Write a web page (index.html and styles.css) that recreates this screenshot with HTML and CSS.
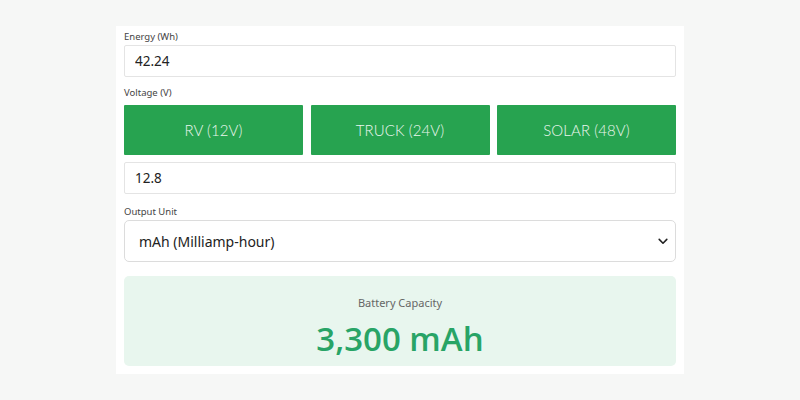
FILE: index.html
```html
<!DOCTYPE html>
<html lang="en">
<head>
<meta charset="utf-8">
<title>Battery Capacity Calculator</title>
<link rel="stylesheet" href="styles.css">
</head>
<body>
<main class="card">
  <label class="label" for="energy">Energy (Wh)</label>
  <input class="field" id="energy" type="text" value="42.24">

  <label class="label" for="voltage">Voltage (V)</label>
  <div class="presets">
    <button class="preset" type="button">RV (12V)</button>
    <button class="preset" type="button">TRUCK (24V)</button>
    <button class="preset" type="button">SOLAR (48V)</button>
  </div>
  <input class="field field-gap" id="voltage" type="text" value="12.8">

  <label class="label" for="unit">Output Unit</label>
  <div class="select-wrap">
    <select class="select" id="unit">
      <option>mAh (Milliamp-hour)</option>
    </select>
    <svg class="chev" width="10" height="7" viewBox="0 0 10 7" aria-hidden="true"><path d="M1.2 1.4 L5 5.2 L8.8 1.4" fill="none" stroke="#222" stroke-width="1.6" stroke-linecap="round" stroke-linejoin="round"/></svg>
  </div>

  <section class="result">
    <div class="result-label">Battery Capacity</div>
    <div class="result-value">3,300 mAh</div>
  </section>
</main>
</body>
</html>
```
FILE: styles.css
```css
html, body {
  margin: 0;
  padding: 0;
}
body {
  background: #f6f7f6;
  font-family: "Noto Sans", "Open Sans", sans-serif;
  padding: 26px 116px 0;
}
.card {
  background: #ffffff;
  width: 552px;
  padding: 4px 8px 8px;
  display: flex;
  flex-direction: column;
}
.label {
  font-size: 9.5px;
  color: #444;
  line-height: 13px;
  margin-bottom: 2px;
}
.field {
  box-sizing: border-box;
  height: 32px;
  border: 1px solid #e4e4e4;
  border-radius: 2px;
  padding: 0 10px;
  font-family: "Noto Sans", sans-serif;
  font-size: 13.5px;
  color: #222;
  background: #fff;
  margin: 0 0 9px;
  outline: none;
}
.field-gap {
  margin-top: 7px;
  margin-bottom: 11px;
}
.presets {
  display: flex;
  gap: 7.5px;
  margin-top: 4px;
}
.preset {
  flex: 1;
  height: 50px;
  border: none;
  border-radius: 1px;
  background: #27a350;
  color: #eaf6ee;
  font-family: "Lato", sans-serif;
  font-weight: 300;
  font-size: 15px;
  letter-spacing: 0.1px;
  padding: 0;
}
.select-wrap {
  position: relative;
  margin-bottom: 14px;
}
.select {
  box-sizing: border-box;
  width: 100%;
  height: 42px;
  border: 1px solid #dcdcdc;
  border-radius: 5px;
  background: #fff;
  padding: 0 14px;
  font-family: "Noto Sans", sans-serif;
  font-size: 14px;
  color: #222;
  appearance: none;
  -webkit-appearance: none;
  outline: none;
}
.chev {
  position: absolute;
  right: 8px;
  top: 18px;
  pointer-events: none;
}
.result {
  background: #e8f6ee;
  border-radius: 5px;
  height: 90px;
  display: flex;
  flex-direction: column;
  align-items: center;
  padding-top: 19px;
  box-sizing: border-box;
}
.result-label {
  font-size: 11px;
  color: #666;
  line-height: 15px;
}
.result-value {
  font-family: "Open Sans", "Noto Sans", sans-serif;
  font-size: 33px;
  font-weight: 600;
  color: #28a466;
  line-height: 44px;
  margin-top: 7px;
}
```
